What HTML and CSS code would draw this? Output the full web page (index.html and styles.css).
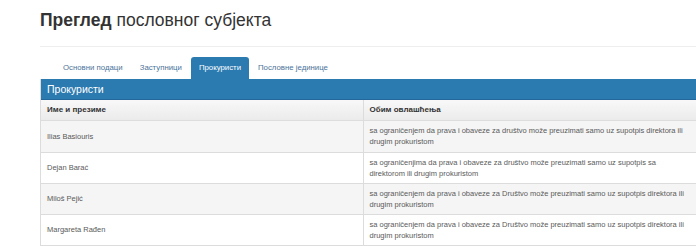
FILE: index.html
```html
<!DOCTYPE html>
<html lang="sr">
<head>
  <meta charset="UTF-8" />
  <title>Преглед пословног субјекта</title>
  <link rel="stylesheet" href="styles.css">
</head>
<body>
  <div class="page">
    <h1 class="page-title"><b>Преглед</b> пословног субјекта</h1>
    <hr class="divider" />

    <ul class="tabs">
      <li class="tab">Основни подаци</li>
      <li class="tab">Заступници</li>
      <li class="tab active">Прокуристи</li>
      <li class="tab">Пословне јединице</li>
    </ul>

    <div class="panel">
      <div class="panel-heading">Прокуристи</div>
      <table class="grid">
        <thead>
          <tr>
            <th class="col-name">Име и презиме</th>
            <th>Обим овлашћења</th>
          </tr>
        </thead>
        <tbody>
          <tr class="first">
            <td>Ilias Basiouris</td>
            <td>sa ograničenjem da prava i obaveze za društvo može preuzimati samo uz supotpis direktora ili drugim prokuristom</td>
          </tr>
          <tr>
            <td>Dejan Barać</td>
            <td>sa ograničenjima da prava i obaveze za društvo može preuzimati samo uz supotpis sa direktorom ili drugim prokuristom</td>
          </tr>
          <tr>
            <td>Miloš Pejić</td>
            <td>sa ograničenjem da prava i obaveze za Društvo može preuzimati samo uz supotpis direktora ili drugim prokuristom</td>
          </tr>
          <tr>
            <td>Margareta Rađen</td>
            <td>sa ograničenjem da prava i obaveze za Društvo može preuzimati samo uz supotpis direktora ili drugim prokuristom</td>
          </tr>
        </tbody>
      </table>
    </div>
  </div>
</body>
</html>
```

FILE: styles.css
```css
:root {
  --primary: #2b7bb1;
  --border: #dcdcdc;
  --text: #5a5a5a;
}
* {
  margin: 0;
  padding: 0;
  box-sizing: border-box;
}
html, body {
  overflow: hidden;
}
body {
  background: #fff;
  color: var(--text);
  font-family: 'Liberation Sans', Arial, sans-serif;
}
.page {
  padding-left: 40px;
  width: 700px;
}
.page-title {
  font-size: 17.5px;
  font-weight: normal;
  color: #333;
  padding-top: 9px;
  line-height: 22px;
}
.page-title b {
  font-weight: bold;
}
.divider {
  border: none;
  border-top: 1px solid #eee;
  margin-top: 15px;
}
.tabs {
  list-style: none;
  display: flex;
  margin-top: 10px;
  padding-left: 15px;
}
.tab {
  font-size: 7.8px;
  line-height: 22px;
  height: 22px;
  padding: 0 8px;
  margin-right: 1px;
  color: #4b7399;
  border-radius: 3px 3px 0 0;
}
.tab.active {
  background: var(--primary);
  color: #fff;
}
.panel {
  border: 1px solid var(--border);
  border-top: none;
}
.panel-heading {
  background: var(--primary);
  color: #fff;
  font-size: 10.5px;
  height: 21px;
  line-height: 20px;
  padding-left: 6px;
  border-bottom: 1px solid #24679a;
}
.grid {
  width: 100%;
  border-collapse: collapse;
  font-size: 7.5px;
}
.grid th {
  text-align: left;
  font-size: 8px;
  font-weight: bold;
  color: #333;
  height: 20px;
  padding: 0 6px;
  background: linear-gradient(#f8f8f8, #ebebeb);
  border-bottom: 1px solid #ddd;
}
.grid th + th {
  border-left: 1px solid var(--border);
}
.col-name {
  width: 322px;
}
.grid td {
  padding: 4px 6px;
  line-height: 11px;
  height: 30px;
  vertical-align: middle;
  border-bottom: 1px solid var(--border);
}
.grid tr.first td {
  height: 32px;
}
.grid td + td {
  border-left: 1px solid var(--border);
}
.grid tbody tr:nth-child(odd) td {
  background: #f5f5f5;
}
```
